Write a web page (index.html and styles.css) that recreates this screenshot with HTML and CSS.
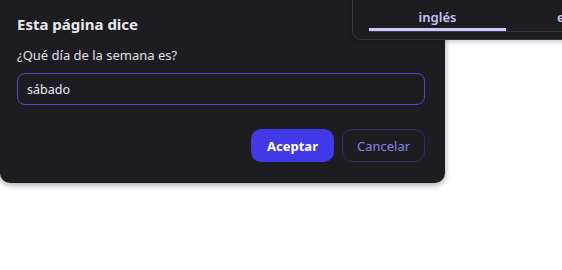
FILE: index.html
```html
<!DOCTYPE html>
<html lang="es">
<head>
    <meta charset="UTF-8">
    <meta name="viewport" content="width=device-width, initial-scale=1.0">
    <title>Esta página dice</title>
    <link rel="stylesheet" href="styles.css">
</head>
<body>
    <div class="dialog">
        <h1 class="dialog-title">Esta página dice</h1>
        <label class="dialog-label" for="answer">¿Qué día de la semana es?</label>
        <input class="dialog-input" id="answer" type="text" value="sábado">
        <div class="dialog-actions">
            <button class="btn btn-primary">Aceptar</button>
            <button class="btn btn-secondary">Cancelar</button>
        </div>
    </div>

    <div class="lang-panel">
        <div class="tabs">
            <div class="tab active">inglés</div>
            <div class="tab wide">español</div>
        </div>
    </div>
</body>
</html>
```

FILE: styles.css
```css
body {
    margin: 0;
    background: #fff;
    font-family: "Noto Sans", "Open Sans", sans-serif;
    width: 562px;
    height: 270px;
    overflow: hidden;
    position: relative;
}
.dialog {
    width: 445px;
    box-sizing: border-box;
    padding: 14px 20px 21px 17px;
    background: #1d1c21;
    border-radius: 0 0 10px 10px;
    box-shadow: 0 2px 6px rgba(0, 0, 0, 0.35);
    display: flex;
    flex-direction: column;
}
.dialog-title {
    margin: 0;
    font-size: 15px;
    line-height: 20px;
    font-weight: 700;
    color: #e8e8ec;
}
.dialog-label {
    margin-top: 12px;
    font-size: 13px;
    line-height: 18px;
    color: #e2e2e6;
}
.dialog-input {
    margin-top: 9px;
    height: 32px;
    box-sizing: border-box;
    padding: 0 9px;
    border: 1.5px solid #5248c9;
    border-radius: 8px;
    background: #1d1c21;
    color: #ececf0;
    font-family: inherit;
    font-size: 12.5px;
    outline: none;
}
.dialog-actions {
    margin-top: 24px;
    display: flex;
    justify-content: flex-end;
    gap: 8px;
}
.btn {
    width: 83px;
    height: 33px;
    border-radius: 10px;
    font-family: inherit;
    font-size: 13px;
    cursor: pointer;
}
.btn-primary {
    background: #4138e6;
    border: none;
    color: #fff;
    font-weight: 700;
}
.btn-secondary {
    background: transparent;
    border: 1px solid #2f2c6b;
    color: #7f86e8;
}
.lang-panel {
    position: absolute;
    top: -1px;
    left: 352px;
    width: 320px;
    height: 41px;
    box-sizing: border-box;
    background: #1d1c21;
    border: 1px solid #3a3a40;
    border-radius: 0 0 0 9px;
    box-shadow: 0 2px 4px rgba(0, 0, 0, 0.2);
    padding: 0 0 0 16px;
}
.tabs {
    display: flex;
    border-bottom: 1px solid #3c3c42;
}
.tab {
    flex: 0 0 137px;
    height: 31px;
    box-sizing: border-box;
    padding-top: 8px;
    text-align: center;
    font-size: 13px;
    font-weight: 600;
    color: #c4c6fb;
}
.tab.wide {
    flex-basis: 152px;
}
.tab.active {
    border-bottom: 3px solid #c9c9ff;
    margin-bottom: -2px;
}
```
